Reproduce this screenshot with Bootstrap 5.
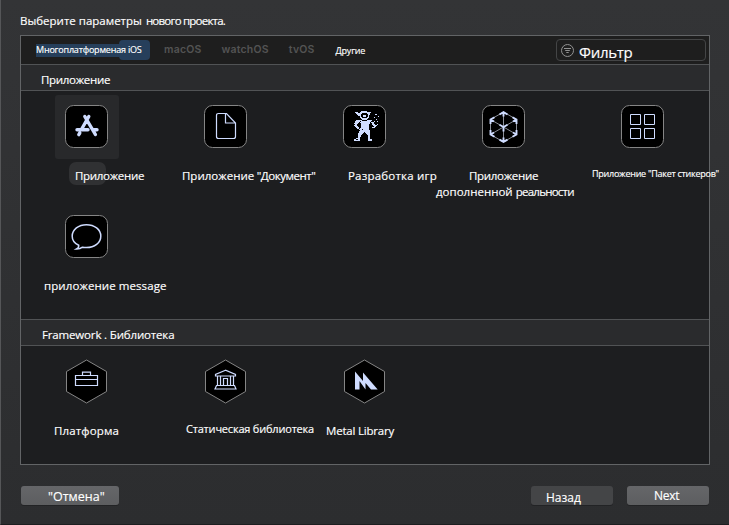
<!DOCTYPE html>
<html lang="ru" data-bs-theme="dark">
<head>
<meta charset="utf-8">
<title>Новый проект</title>
<link href="https://cdn.jsdelivr.net/npm/bootstrap@5.3.0/dist/css/bootstrap.min.css" rel="stylesheet">
<style>
body{width:729px;height:525px;overflow:hidden;background:linear-gradient(#333436,#2c2d2f);border-left:1px solid #555658;border-bottom:1px solid #1d1e20;font:11.5px/16px "Open Sans","Noto Sans",sans-serif;color:#fff;padding:13px 19px 0;-webkit-text-stroke:.15px}
h1,h2{font:inherit;margin:0}
h1{height:22px;padding-left:0}
.tight{letter-spacing:-.78px;margin-left:1px}
.t3{letter-spacing:-.3px}.t45{letter-spacing:-.45px}.t7{letter-spacing:-.75px}
.chooser{width:690px;height:430px;border:1px solid #626466;background:#1d1e20}
.platforms{height:29px;background:#1e1e1e;border-bottom:1px solid #515355}
.platforms button{border:0;background:none;padding:0;color:#fff;font-size:9px;letter-spacing:-.2px;white-space:nowrap}
.platforms .off{font:600 10.5px/16px Inter,sans-serif;color:#535353;letter-spacing:.2px;margin:6px 0 0 20px;-webkit-text-stroke:0}
.platforms .off.first{margin-left:15px}
.platforms .other{margin:7px 0 0 21px}
.multi{margin-left:15px;width:113px;height:20px;text-align:left;position:relative;z-index:0}
.multi::before{content:"";position:absolute;z-index:-1;left:0;top:4px;width:90px;height:13px;background:#263f5b}
.multi::after{content:"";position:absolute;z-index:-1;left:83px;top:0;width:31px;height:20px;border-radius:4px;background:#263f5b}
.filter{width:150px;height:22px;margin:3px 3px 0 0;border:1px solid #444546;border-radius:4px;font-size:15px;line-height:20px;letter-spacing:-.3px}
.filter span{padding-top:2px}
.heading{height:26px;background:#2a2b2d;border-bottom:1px solid #515355;padding:7px 0 0 20px}
.heading+.kinds+.heading{height:27px;border-top:1px solid #515355;padding-left:21px;letter-spacing:-.16px}
.kinds{display:grid;grid-template-columns:repeat(5,131px);column-gap:8px;grid-auto-rows:110px;padding-top:4px}
.apps{height:228px}
.pic{width:64px;height:64px;margin-left:34px;padding:10px;border-radius:3px}
.pic svg{display:block;overflow:visible}
.picked .pic{background:#28292b}
.cap{margin-top:9px;white-space:nowrap;position:relative;z-index:0}
.picked .cap::before{content:"";position:absolute;z-index:-1;left:-6px;top:-6px;width:37px;height:23px;border-radius:7px;background:#303133}
.libs{padding-top:3px}
.libs .pic{padding-top:10px}.libs .cap{margin-top:10px}
.ink{stroke:#cfdcff;fill:none;stroke-width:1.2}
.tile{fill:#000;stroke:#858585}
.at-app{margin-left:54px}.at-doc{margin-left:22px}.at-game{margin-left:49px}.at-ar{margin-left:-2px}.at-ar .t3{padding-left:33px}
.at-msg{margin-left:23px;letter-spacing:.08px}.at-fw{margin-left:33px;letter-spacing:.15px}.at-metal{margin-left:27px;letter-spacing:-.2px}
.at-game{letter-spacing:.2px}
.cap.at-stick{margin:7px 0 0 15px;font-size:9px;letter-spacing:-.26px}
.libs .at-static{margin:8px 0 0 26px;font-size:11px;letter-spacing:-.2px}
footer{padding:21px 0 0 1px}
.act{height:19px;width:82px;border:0;border-radius:3px;padding:0;color:#fff;text-align:left;line-height:16px;font-size:12px;box-shadow:0 1px 0 #222325}
.act.strong{background:linear-gradient(#656669,#5d5e60)}
.act.weak{background:#444547}
.act.cancel{width:98px;padding:3px 0 0 27px;font-size:12.5px}
.act.back{margin-left:412px;padding:4px 0 0 15px}
.act.next{margin-left:14px;padding-left:27px;letter-spacing:-.3px}
</style>
</head>
<body>
<h1>Выберите параметры <span class="tight">нового проекта.</span></h1>
<main class="chooser">
  <nav class="platforms d-flex align-items-start">
    <button class="multi mt-1">Многоплатформеная iOS</button>
    <button class="off first">macOS</button>
    <button class="off">watchOS</button>
    <button class="off">tvOS</button>
    <button class="other">Другие</button>
    <div class="filter ms-auto d-flex">
      <svg width="22" height="20" viewBox="0 0 22 20" fill="none" stroke="#929292"><circle cx="10.5" cy="10.5" r="6"/><path d="M7 8.5h7M8.2 10.5h4.6M9.3 12.5h2.4"/></svg>
      <span>Фильтр</span>
    </div>
  </nav>
  <h2 class="heading t3">Приложение</h2>
  <section class="kinds apps">
    <div class="picked">
      <div class="pic"><svg width="43" height="43"><rect class="tile" x=".5" y=".5" width="42" height="42" rx="8"/><path fill="none" stroke="#cfdcff" stroke-width="3.4" stroke-linecap="round" d="M23.8 11.5 17 23.5M14.8 28l-1 1.6M19.8 11.5l10.6 18M12 24.7h11M28.5 24.7H32"/></svg></div>
      <div class="cap t3 at-app">Приложение</div>
    </div>
    <div>
      <div class="pic"><svg width="43" height="43"><rect class="tile" x=".5" y=".5" width="42" height="42" rx="8"/><path class="ink" d="M14.5 8.5h8l9 9.5v13.5q0 2-2 2h-15q-2 0-2-2v-21q0-2 2-2zM21.5 8.5V18h10"/></svg></div>
      <div class="cap at-doc">Приложение<span class="t45"> "Документ"</span></div>
    </div>
    <div>
      <div class="pic"><svg width="43" height="43"><rect class="tile" x=".5" y=".5" width="42" height="42" rx="8"/><path stroke="#cfdcff" shape-rendering="crispEdges" d="M18 6.5h6M12 7.5h3M17 7.5h9M26 7.5h2M13 8.5h6M24 8.5h3M14 9.5h4M25 9.5h2M15 10.5h3M20 10.5h3M25 10.5h1M17 11.5h1M20 11.5h3M25 11.5h1M17 12.5h2M24 12.5h2M18 13.500h7M19 14.500h5M13 15.500h6M24 15.500h5M12 16.500h5M18 16.500h10M12 17.500h4M17 17.500h10M28 17.500h3M11 18.500h4M18 18.500h9M29 18.500h2M12 19.500h2M18 19.500h8M29 19.500h3M34 19.500h1M11 20.500h3M18 20.500h8M30 20.500h4M12 21.500h3M18 21.500h8M31 21.500h2M13 22.500h3M18 22.500h8M29 22.500h3M14 23.500h2M17 23.500h9M16 24.500h3M20 24.500h6M17 25.500h10M16 26.500h11M16 27.500h5M22 27.500h5M15 28.500h5M23 28.500h4M15 29.500h4M24 29.500h3M15 30.500h3M25 30.500h2M15 31.500h3M25 31.500h2M15 32.500h2M25 32.500h2M13 33.500h4M25 33.500h2M11 34.500h2M15 34.500h2M25 34.500h4M11 35.500h6M25 35.500h4M32 9.500h2M35 11.500h1M31 12.500h1M33 14.500h1M31 16.500h1M34 16.500h1"/></svg></div>
      <div class="cap at-game">Разработка игр</div>
    </div>
    <div>
      <div class="pic"><svg width="43" height="43"><rect class="tile" x=".5" y=".5" width="42" height="42" rx="8"/><path stroke="#8b8f98" fill="none" d="M21.5 7 34.5 14.5v15l-13 7.5-13-7.5v-15zM8.5 14.5l13 7.5 13-7.5M21.5 7v30M8.5 29.5l13-7.5 13 7.5"/><path fill="none" stroke="#cfdcff" stroke-width="1.9" d="M17.500 9.500l4-2.300 4 2.300M21.500 7v4.500M8.500 19v-4.400l4-2.300M8.500 14.500l3.500 2M34.500 19v-4.400l-4-2.300M34.500 14.500l-3.500 2M8.500 25v4.500l4 2.300M8.500 29.500l3.500-2M34.500 25v4.500l-4 2.300M34.500 29.500l-3.500-2M17.500 34.600l4 2.300 4-2.300M21.500 37v-4.500M17.500 19.700l4 2.300 4-2.300M21.500 22v4.500"/></svg></div>
      <div class="cap at-ar"><span class="t3">Приложение</span><br>дополненной <span class="t7">реальности</span></div>
    </div>
    <div>
      <div class="pic"><svg width="43" height="43"><rect class="tile" x=".5" y=".5" width="42" height="42" rx="8"/><path fill="none" stroke="#cfdcff" d="M9.5 9.5h10v10h-10zM23.5 9.5h10v10h-10zM9.5 23.5h10v10h-10zM23.5 23.5h10v10h-10z"/></svg></div>
      <div class="cap at-stick">Приложение "Пакет стикеров"</div>
    </div>
    <div>
      <div class="pic"><svg width="43" height="43"><rect class="tile" x=".5" y=".5" width="42" height="42" rx="8"/><path fill="none" stroke="#cfdcff" stroke-width="1.5" d="M11.5 34q2.5-1.300 2.200-3.700C9 28.200 7.200 24.800 7.200 21.300 7.200 14.500 13.500 9.700 21.500 9.700S35.800 14.500 35.800 21.200 29.500 32.600 21.500 32.600q-2.200 0-4-.4-2.600 1.900-6 1.800z"/></svg></div>
      <div class="cap at-msg">приложение message</div>
    </div>
  </section>
  <h2 class="heading">Framework . Библиотека</h2>
  <section class="kinds libs">
    <div>
      <div class="pic"><svg width="43" height="45"><path class="tile" d="M21.5 1 41.500 12.500v20L21.500 44 1.500 32.500v-20z"/><path class="ink" d="M10.500 16.500h22v10h-22zM10.500 20.500h22M17.500 16.500V13h8v3.500M17 13.200h9"/></svg></div>
      <div class="cap at-fw">Платформа</div>
    </div>
    <div>
      <div class="pic"><svg width="43" height="45"><path class="tile" d="M21.500 1 41.500 12.500v20L21.500 44 1.500 32.500v-20z"/><path class="ink" d="M21.500 11.200 11.500 15.500v1.500h20V15.500zM13.500 17v9.500M16.500 17v9.500M26.500 17v9.500M29.500 17v9.500M19.500 26.500v-7h4v7M12.500 26.500h18l1.500 3.500H11z"/></svg></div>
      <div class="cap at-static">Статическая библиотека</div>
    </div>
    <div>
      <div class="pic"><svg width="43" height="45"><path class="tile" d="M21.500 1 41.500 12.500v20L21.500 44 1.500 32.500v-20z"/><path fill="#cfdcff" d="M12 30.500V12.500l8 9.500V13.500l14.700 17H28l-5.500-6.500V30.500l-6-8.500V30.500z"/></svg></div>
      <div class="cap at-metal">Metal Library</div>
    </div>
  </section>
</main>
<footer class="d-flex">
  <button class="act strong cancel">"Отмена"</button>
  <button class="act weak back">Назад</button>
  <button class="act strong next">Next</button>
</footer>
<script src="https://cdn.jsdelivr.net/npm/bootstrap@5.3.0/dist/js/bootstrap.bundle.min.js"></script>
</body>
</html>
